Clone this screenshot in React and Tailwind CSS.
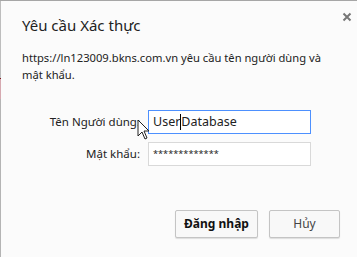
import React from "react";

const font = { fontFamily: '"Noto Sans", "Open Sans", sans-serif' };

const CloseIcon = () => (
  <svg width="10" height="10" viewBox="0 0 10 10" className="mt-[-2px]">
    <path d="M1.5 1.5 L8.5 8.5 M8.5 1.5 L1.5 8.5" stroke="#777" strokeWidth="2" />
  </svg>
);

const Pointer = () => (
  <svg width="13" height="22" viewBox="0 0 13 22" className="absolute left-[-12px] top-[8px]">
    <path d="M1 1 L1 17 L5 13 L8 20 L10 19 L7 12 L12 12 Z" fill="#fff" stroke="#222" strokeWidth="1" />
  </svg>
);

const App = () => {
  return (
    <div className="flex w-[357px] h-[257px] bg-[#fbfbfb] text-[#222] border-t border-[#a6a6a6]" style={font}>
      <div className="flex flex-col w-px shrink-0">
        <div className="h-[77px] bg-[#bdbdbd]" />
        <div className="h-px bg-[#7a1a20]" />
        <div className="h-[20px] bg-[#d6a9b0]" />
        <div className="flex-1 bg-[#b4b4b4]" />
      </div>
      <div className="flex-1 flex flex-col">
        <div className="flex justify-between pl-[21px] pr-[5px] pt-[13px]">
          <h1 className="text-[15px] leading-[22px]">Yêu cầu Xác thực</h1>
          <CloseIcon />
        </div>
        <p className="pl-[21px] mt-[13px] text-[11.2px] leading-[17px]">
          https://ln123009.bkns.com.vn yêu cầu tên người dùng và
          <br />
          mật khẩu.
        </p>
        <div className="grid grid-cols-[139px_163px] gap-x-[8px] gap-y-[8px] mt-[27px] text-[11.5px] items-center">
          <label className="text-right">Tên Người dùng:</label>
          <div className="relative h-[24px] border border-[#4d90fe] bg-white flex items-center px-[4px] text-[12.5px]">
            <span>User</span>
            <span className="w-px h-[16px] bg-black" />
            <span>Database</span>
            <Pointer />
          </div>
          <label className="text-right">Mật khẩu:</label>
          <div className="h-[24px] border border-[#d9d9d9] bg-white flex items-center px-[4px] text-[9.2px]">
            *************
          </div>
        </div>
        <div className="flex justify-end gap-[11px] pr-[17px] mt-[44px] text-[12px]">
          <button className="w-[83px] h-[28px] border border-[#c4c4c4] rounded-[2px] bg-[#f8f8f8] shadow-[0_1px_1px_rgba(0,0,0,0.12)] font-bold text-[#111]">
            Đăng nhập
          </button>
          <button className="w-[71px] h-[28px] border border-[#c4c4c4] rounded-[2px] bg-[#f8f8f8] shadow-[0_1px_1px_rgba(0,0,0,0.12)] text-[#444]">
            Hủy
          </button>
        </div>
      </div>
    </div>
  );
};

export default App;
